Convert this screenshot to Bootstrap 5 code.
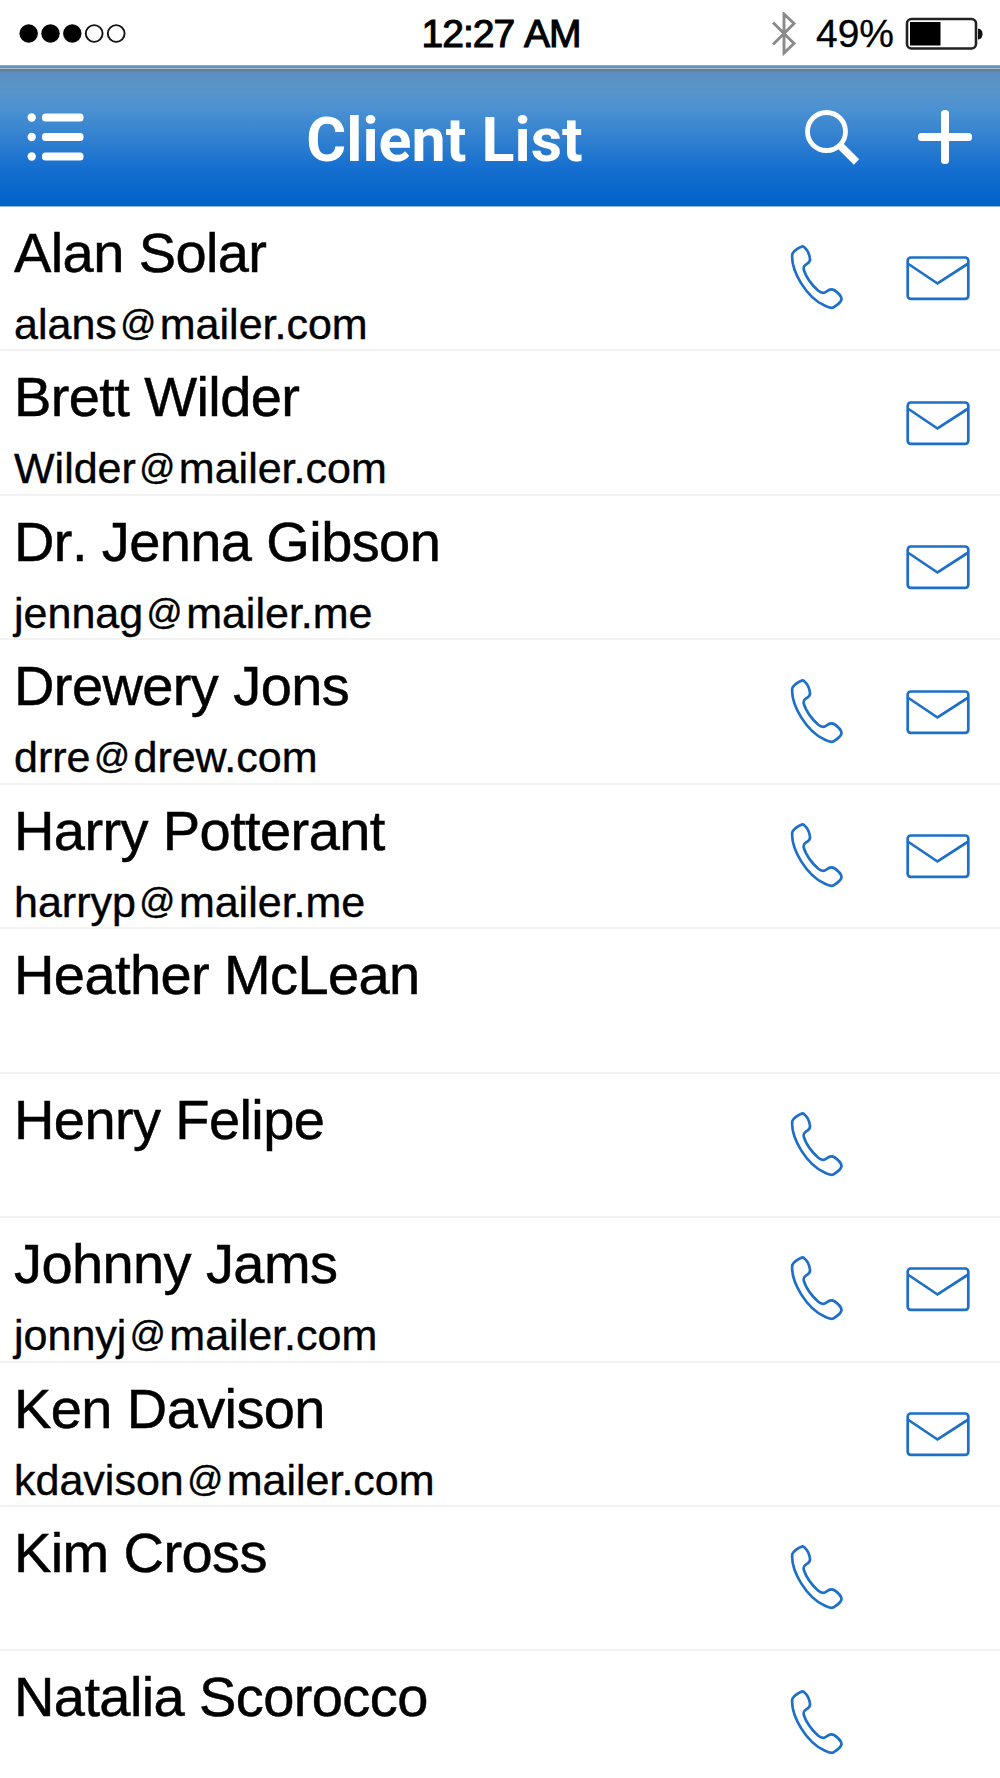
<!DOCTYPE html>
<html lang="en">
<head>
    <meta charset="UTF-8">
    <meta name="viewport" content="width=device-width, initial-scale=1.0">
    <title>Client List</title>
    <link rel="stylesheet" href="https://cdn.jsdelivr.net/npm/bootstrap@5.3.2/dist/css/bootstrap.min.css">
    <style>
        body {
            font-family: "Liberation Sans", Arial, sans-serif;
            color: #000;
            background: #fff;
            height: 1778px;
            overflow: hidden;
        }
        svg { display: block; flex: none; }

        .status-bar { height: 65px; padding: 2px 17px 0 19px; }
        .status-bar > div { flex: 1 1 0; }
        .status-bar .clock { font-size: 39px; line-height: 65px; letter-spacing: -1px; font-kerning: none; -webkit-text-stroke: 1.1px #000; flex: none; white-space: nowrap; }
        .status-bar .percent { font-size: 39px; line-height: 65px; margin: 0 11px 0 19px; -webkit-text-stroke: .3px #000; }

        .title-bar {
            height: 142px;
            padding: 2px 27px 0 27px;
            border-bottom: 1px solid #8fb5e2;
            background: linear-gradient(to bottom,
                #a9c8da 0, #6095bb 1px, #6095bb 3px, #b0bcc8 3px, #b0bcc8 4px, #5e7f9c 4px, #5e8199 6px,
                #5b8fc0 7px, #5895cb 28px, #4b91d2 44px, #2f7fd0 76px, #136ecf 106px, #0062c9 141px);
        }
        .title-bar h1 { font: bold 61px/1 Roboto, sans-serif; color: #fff; margin: 0; padding-top: 7px; white-space: nowrap; }
        .title-actions { gap: 57px; }

        .client-row { height: 144.44px; padding: 0 30px 0 14px; border-bottom: 2px solid #f3f3f3; }
        .client-name { font-size: 56px; line-height: 64px; padding-top: 14px; letter-spacing: -.6px; font-kerning: none; -webkit-text-stroke: .5px #000; white-space: nowrap; }
        .client-mail { font-size: 43px; line-height: 50px; margin-top: 14px; -webkit-text-stroke: .4px #000; white-space: nowrap; }
        .client-mail .at { display: inline-block; width: 43px; font-size: 35.5px; line-height: 1; text-align: center; position: relative; top: -4px; }
        .client-icons { gap: 62px; }
    </style>
</head>
<body>
    <!-- Shared icons -->
    <svg width="0" height="0" class="position-absolute">
        <symbol id="icon-phone" viewBox="0 0 54 66">
            <path d="M12 1.500C8.500 3 4 5.500 2.300 9C0.500 26 17 53 35 60.800C39 62.800 43 63.200 44.500 61.700C47 60.200 50.500 57.500 51.500 54.500C51.500 51 48 47.500 44 45C41 43.500 39 44.500 36.500 46.500C34 48.500 31 48 28 45.500C22 40 16.500 33 14 25.500C12.500 21 15.500 20 17.500 18.500C20 17 20.500 15.500 19.800 12.500C19 8.500 17 4.500 14.500 2.500C13.800 1.500 13 1.200 12 1.500Z" fill="none" stroke="#1e6fc8" stroke-width="2.700" stroke-linejoin="round"/>
        </symbol>
        <symbol id="icon-mail" viewBox="0 0 64 46">
            <rect x="1.700" y="2.500" width="60.600" height="41.300" rx="3" fill="none" stroke="#1e6fc8" stroke-width="2.700"/>
            <path d="M2.500 9L31.500 28.500L61.500 9" fill="none" stroke="#1e6fc8" stroke-width="2.700"/>
        </symbol>
    </svg>

    <!-- Status Bar -->
    <div class="status-bar d-flex align-items-center">
        <div>
            <svg width="108" height="22" viewBox="0 0 108 22">
                <circle cx="9.700" cy="10.500" r="9.200"/>
                <circle cx="31.500" cy="10.500" r="9.200"/>
                <circle cx="53.300" cy="10.500" r="9.200"/>
                <circle cx="75.200" cy="10.500" r="8.400" fill="none" stroke="#111" stroke-width="1.900"/>
                <circle cx="97.200" cy="10.500" r="8.400" fill="none" stroke="#111" stroke-width="1.900"/>
            </svg>
        </div>
        <div class="clock">12:27 AM</div>
        <div class="d-flex align-items-center justify-content-end">
            <svg width="26" height="44" viewBox="0 0 26 44">
                <path d="M2 10.500L23 31.500L13 41V2L23 11.500L2 32.500" fill="none" stroke="#8a8a8a" stroke-width="2.900"/>
            </svg>
            <span class="percent">49%</span>
            <svg width="78" height="34" viewBox="0 0 78 34">
                <rect x="2" y="2" width="69" height="29.500" rx="4.500" fill="none" stroke="#222" stroke-width="2.600"/>
                <rect x="5" y="5" width="30.500" height="23.500"/>
                <path d="M73 11.500Q77.500 12 77.500 17T73 22.500Z" fill="#111"/>
            </svg>
        </div>
    </div>

    <!-- Title Bar -->
    <header class="title-bar d-flex align-items-center justify-content-between">
        <svg width="58" height="50" viewBox="0 0 58 50" fill="#fff">
            <circle cx="4.700" cy="5.500" r="4.200"/><rect x="15" y="1.500" width="41.500" height="8" rx="3.500"/>
            <circle cx="4.700" cy="25" r="4.200"/><rect x="15" y="21" width="41.500" height="8" rx="3.500"/>
            <circle cx="4.700" cy="44.500" r="4.200"/><rect x="15" y="40.500" width="41.500" height="8" rx="3.500"/>
        </svg>
        <h1>Client List</h1>
        <div class="title-actions d-flex align-items-center">
            <svg width="56" height="56" viewBox="0 0 56 56" fill="none" stroke="#fff">
                <circle cx="22.500" cy="22.500" r="19" stroke-width="4.800"/>
                <path d="M35.500 36L52.500 53" stroke-width="7.500"/>
            </svg>
            <svg width="56" height="56" viewBox="0 0 56 56" fill="#fff">
                <rect x="1" y="24" width="54" height="8" rx="3.500"/>
                <rect x="24" y="1" width="8" height="54" rx="3.500"/>
            </svg>
        </div>
    </header>

    <main id="clientList"></main>

    <script>
        const clients = [
            { name: 'Alan Solar', mail: 'alans@mailer.com', phone: true },
            { name: 'Brett Wilder', mail: 'Wilder@mailer.com' },
            { name: 'Dr. Jenna Gibson', mail: 'jennag@mailer.me' },
            { name: 'Drewery Jons', mail: 'drre@drew.com', phone: true },
            { name: 'Harry Potterant', mail: 'harryp@mailer.me', phone: true },
            { name: 'Heather McLean' },
            { name: 'Henry Felipe', phone: true },
            { name: 'Johnny Jams', mail: 'jonnyj@mailer.com', phone: true },
            { name: 'Ken Davison', mail: 'kdavison@mailer.com' },
            { name: 'Kim Cross', phone: true },
            { name: 'Natalia Scorocco', phone: true }
        ];

        // Hidden icons keep their place so the columns line up
        function icon(id, width, height, shown) {
            return `<svg width="${width}" height="${height}" class="${shown ? '' : 'invisible'}"><use href="#${id}"/></svg>`;
        }

        document.getElementById('clientList').innerHTML = clients.map(client => `
            <div class="client-row d-flex justify-content-between">
                <div>
                    <div class="client-name">${client.name}</div>
                    ${client.mail ? `<div class="client-mail">${client.mail.replace('@', '<span class="at">@</span>')}</div>` : ''}
                </div>
                <div class="client-icons d-flex align-items-center">
                    ${icon('icon-phone', 54, 66, client.phone)}
                    ${icon('icon-mail', 64, 46, client.mail)}
                </div>
            </div>
        `).join('');
    </script>
    <script src="https://cdn.jsdelivr.net/npm/bootstrap@5.3.2/dist/js/bootstrap.bundle.min.js"></script>
</body>
</html>
